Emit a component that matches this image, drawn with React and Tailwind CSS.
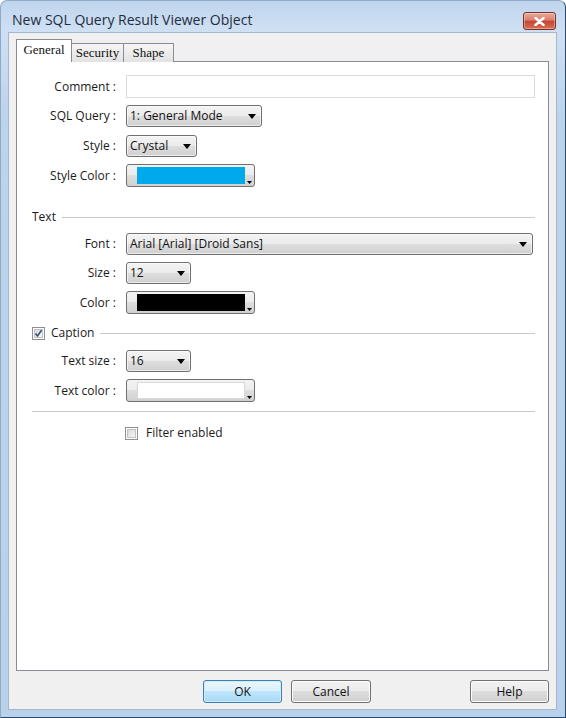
import { useState } from 'react'

/* ─── Combobox (Win7 look, read-only) ─── */
function Combo({ value, w }) {
  return (
    <div
      className={`${w} h-[22px] rounded-[3px] border border-[#707070] bg-[linear-gradient(#f3f3f3_0%,#ebebeb_50%,#dedede_50%,#d0d0d0_100%)] flex items-center pl-[3px] pr-[5px] shadow-[inset_0_0_0_1px_rgba(255,255,255,0.6)]`}
    >
      <span className="flex-1 truncate text-[12px] text-[#111]">{value}</span>
      <svg width="8" height="5" viewBox="0 0 8 5" className="shrink-0">
        <path d="M0 0h8L4 5z" fill="#000" />
      </svg>
    </div>
  )
}

/* ─── Colour picker button ─── */
function ColorPick({ color, light }) {
  return (
    <div className="relative w-[129px] h-[23px] rounded-[3px] border border-[#707070] bg-[linear-gradient(#f3f3f3_0%,#ebebeb_50%,#dedede_50%,#d0d0d0_100%)] flex items-center pl-[10px] pr-[9px]">
      <div className={`h-[17px] flex-1 ${color} ${light ? 'border border-[#d8d8d8]' : ''}`} />
      <svg width="5" height="3" viewBox="0 0 5 3" className="absolute right-[2px] bottom-[2px]">
        <path d="M0 0h5L2.5 3z" fill="#000" />
      </svg>
    </div>
  )
}

function CheckBox({ checked }) {
  return (
    <div className="w-[13px] h-[13px] border border-[#8e8f8f] bg-white p-[1px] shrink-0">
      <div className="w-full h-full bg-[linear-gradient(135deg,#d8d8d8,#f6f6f6)] border border-[#c2c2c2] relative">
        {checked && (
          <svg width="9" height="9" viewBox="0 0 9 9" className="absolute -left-px -top-px">
            <path d="M1.5 4.5 L3.5 7 L7.5 1.2" stroke="#3b4e7a" strokeWidth="1.6" fill="none" />
          </svg>
        )}
      </div>
    </div>
  )
}

function Row({ label, children, className = '' }) {
  return (
    <div className={`flex items-center ${className}`}>
      <span className="w-[84px] shrink-0 text-right text-[12px] text-[#1a1a1a] whitespace-nowrap">{label}</span>
      <div className="ml-[10px] flex-1 flex">{children}</div>
    </div>
  )
}

function Btn({ children, primary, w }) {
  return (
    <button
      className={`${w} h-[23px] rounded-[3px] border text-[12px] text-[#111] ${
        primary
          ? 'border-[#3c7fb1] bg-[linear-gradient(#eaf6fd_0%,#d9f0fc_50%,#bee6fd_50%,#a7d9f5_100%)] shadow-[inset_0_0_0_1px_#d1ecf9]'
          : 'border-[#707070] bg-[linear-gradient(#f2f2f2_0%,#ebebeb_50%,#dddddd_50%,#cfcfcf_100%)] shadow-[inset_0_0_0_1px_#fcfcfc]'
      }`}
    >
      {children}
    </button>
  )
}

export default function App() {
  const [tab] = useState('General')
  const tabs = [
    { name: 'General', w: 'w-[56px]' },
    { name: 'Security', w: 'w-[53px]' },
    { name: 'Shape', w: 'w-[51px]' },
  ]

  return (
    <div className="w-[566px] h-[718px] flex flex-col rounded-t-[7px] border border-[#8fa9c6] border-r-[#2c4a6b] border-b-[#2c4a6b] bg-[linear-gradient(#bfd5ed,#cfe0f3_30px,#bcd3ec_120px,#b9d1ea)] font-[family-name:'Open_Sans',sans-serif]">
      {/* title bar */}
      <div className="h-[31px] flex items-end justify-between pl-[11px] pr-[9px] pb-[2px]">
        <span className="text-[14px] leading-[20px] text-[#1f2d3d]">New SQL Query Result Viewer Object</span>
        <div className="w-[33px] h-[18px] rounded-[3px] border border-[#7a2f27] bg-[linear-gradient(#e9a99b_0%,#d8806f_45%,#c7452f_50%,#d2705a_100%)] flex items-center justify-center shadow-[inset_0_0_0_1px_rgba(255,255,255,0.35)]">
          <svg width="11" height="9" viewBox="0 0 11 9">
            <path d="M1.5 1 L9.5 8 M9.5 1 L1.5 8" stroke="#fff" strokeWidth="2.4" strokeLinecap="round" />
          </svg>
        </div>
      </div>

      {/* client area */}
      <div className="ml-[7px] mr-[8px] mb-[7px] flex-1 bg-[#f0f0f0] border border-[#a3b7cf] px-[7px] pt-[6px] flex flex-col">
        {/* tabs */}
        <div className="flex items-end h-[23px] relative z-10 font-[family-name:'Liberation_Serif',serif] text-[13px] text-[#111]">
          {tabs.map((t, i) => (
            <div
              key={t.name}
              className={`${t.w} ${i > 0 ? '-ml-px' : ''} border border-[#898c95] flex items-center justify-center ${
                t.name === tab
                  ? 'h-[23px] bg-white border-b-0 pb-[2px]'
                  : 'h-[19px] bg-[linear-gradient(#f6f6f6,#e2e2e2)] border-b-0'
              }`}
            >
              {t.name}
            </div>
          ))}
        </div>

        {/* tab page */}
        <div className="-mt-px h-[610px] bg-white border border-[#898c95] pl-[15px] pr-[13px] pt-[13px] flex flex-col">
          <Row label="Comment :">
            <div className="w-full h-[23px] border border-[#dbdbdb] bg-white" />
          </Row>
          <Row label="SQL Query :" className="mt-[7px]">
            <Combo value="1: General Mode" w="w-[136px]" />
          </Row>
          <Row label="Style :" className="mt-[8px]">
            <Combo value="Crystal" w="w-[71px]" />
          </Row>
          <Row label="Style Color :" className="mt-[7px]">
            <ColorPick color="bg-[#00a9ec]" />
          </Row>

          {/* Text group */}
          <div className="mt-[22px] h-[16px] flex items-center gap-[6px] text-[12px] text-[#1a1a1a]">
            <span>Text</span>
            <div className="flex-1 border-t border-[#c9c9c9]" />
          </div>
          <Row label="Font :" className="mt-[8px]">
            <Combo value="Arial [Arial] [Droid Sans]" w="w-[407px]" />
          </Row>
          <Row label="Size :" className="mt-[7px]">
            <Combo value="12" w="w-[65px]" />
          </Row>
          <Row label="Color :" className="mt-[7px]">
            <ColorPick color="bg-black" />
          </Row>

          {/* Caption group */}
          <div className="mt-[11px] h-[16px] flex items-center text-[12px] text-[#1a1a1a]">
            <CheckBox checked />
            <span className="ml-[6px]">Caption</span>
            <div className="ml-[6px] flex-1 border-t border-[#c9c9c9]" />
          </div>
          <Row label="Text size :" className="mt-[9px]">
            <Combo value="16" w="w-[65px]" />
          </Row>
          <Row label="Text color :" className="mt-[7px]">
            <ColorPick color="bg-white" light />
          </Row>

          <div className="mt-[9px] border-t border-[#c9c9c9]" />

          <div className="mt-[12px] ml-[93px] flex items-center gap-[8px] text-[12px] text-[#1a1a1a]">
            <CheckBox />
            <span>Filter enabled</span>
          </div>
        </div>

        {/* dialog buttons */}
        <div className="mt-[9px] flex items-start">
          <div className="ml-[187px] flex gap-[9px]">
            <Btn primary w="w-[79px]">OK</Btn>
            <Btn w="w-[80px]">Cancel</Btn>
          </div>
          <div className="ml-auto flex">
            <Btn w="w-[79px]">Help</Btn>
          </div>
        </div>
      </div>
    </div>
  )
}
